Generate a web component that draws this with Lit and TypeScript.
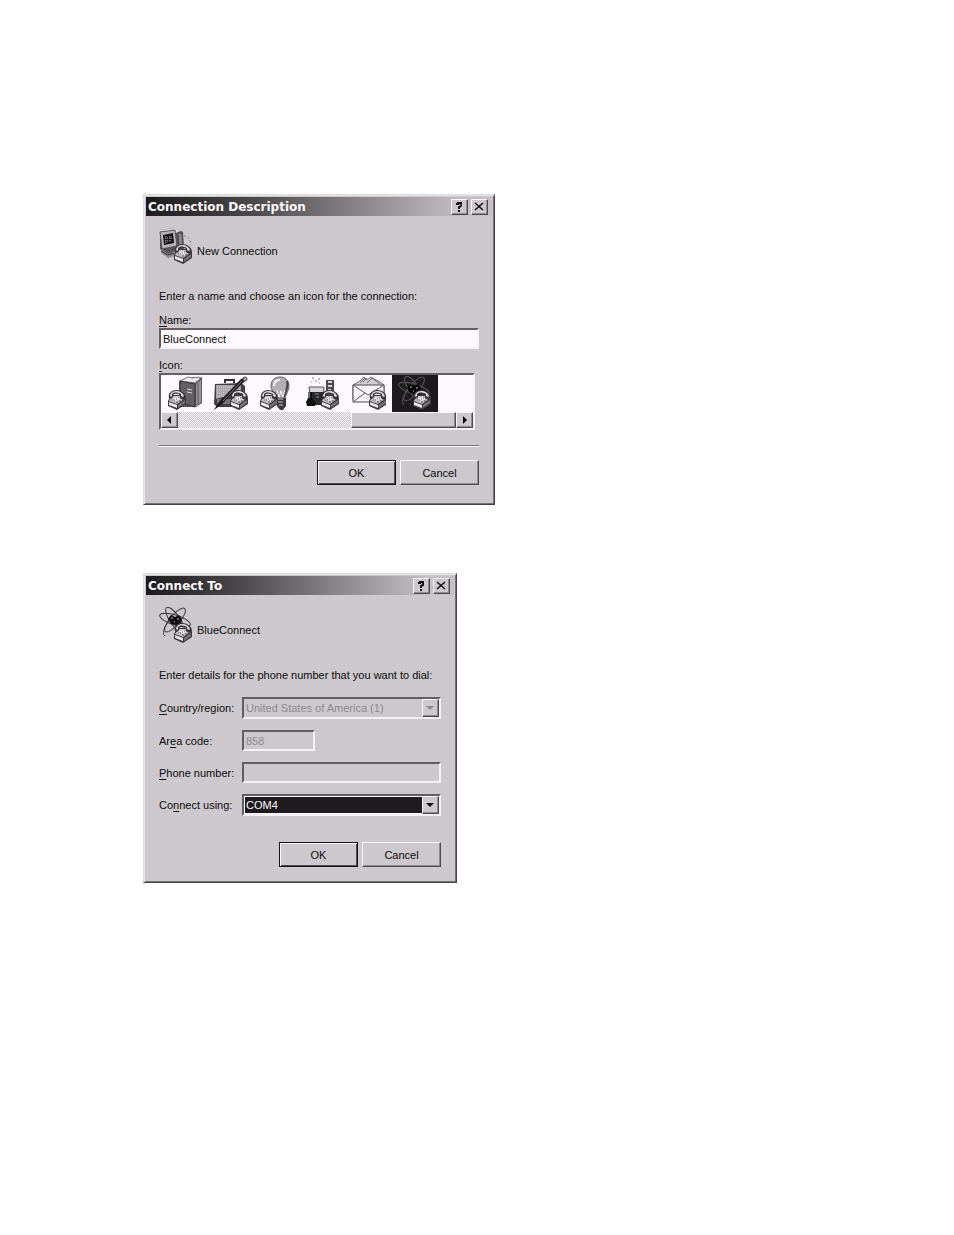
import { LitElement, html, svg, css, TemplateResult, SVGTemplateResult } from "lit";
import { customElement } from "lit/decorators.js";

/* Desk telephone, 18 x 19 units, placed with its top left corner at x, y. */
const phone = (x: number, y: number): SVGTemplateResult => svg`
  <g transform="translate(${x} ${y})">
    <path d="M3 5 L14 5 L18 8 L18 14 L9 20 L0 16 L0 11 Z" fill="#3c393c" />
    <path d="M4 6 L13 6 L16 9 L9 14 L1 11 Z" fill="#c4bfc4" />
    <path d="M1 12 L9 15 L9 18 L1 15 Z" fill="#ece8ec" />
    <path d="M10 15 L17 10 L17 13 L10 18 Z" fill="#777277" />
    <path d="M5 8 L10 7 L12 9 L8 11 Z" fill="#f4f0f4" />
    <path d="M6 10h1M8 9h1M10 8h1M4 10h1M8 12h2M11 11h2" stroke="#565256" />
    <path d="M1 8 C0 4 3 0 8 0 C13 0 17 3 18 7 L15 10 L12 8 L12 5 C9 3 6 4 5 5 L5 7 L3 9 Z" fill="#373437" />
    <path d="M2 6 C2 4 4 1 8 1 C12 1 15 3 16 6 L15 7 L13 6 L13 4 C9 2 6 2 4 4 L4 6 L3 7 Z" fill="#dad6da" />
  </g>`;

const atom = (line: string, core: string): SVGTemplateResult => svg`
  <g fill="none" stroke=${line}>
    <ellipse cx="16" cy="13" rx="16" ry="5" transform="rotate(18 16 13)" />
    <ellipse cx="16" cy="13" rx="15" ry="5" transform="rotate(-50 16 13)" />
    <ellipse cx="16" cy="13" rx="15" ry="5" transform="rotate(56 16 13)" />
    <path d="M6 29 C2 26 7 16 12 12" />
  </g>
  <path d="M9 12 L12 8 L16 10 L20 8 L23 12 L22 17 L17 18 L12 17 Z" fill=${core} />
  <path d="M12 11h2M18 12h2M15 15h1" stroke="#cbc7cb" />`;

const pictures: Record<string, SVGTemplateResult> = {
  computer: svg`
    <path d="M1 2 L16 0 L24 4 L25 21 L9 26 L1 21 Z" fill="#565256" />
    <path d="M1 2 L16 0 L22 3 L17 5 L2 6 Z" fill="#dedade" />
    <path d="M1 4 L16 2 L18 18 L3 21 Z" fill="#b8b3b8" stroke="#565256" />
    <path d="M4 7 L14 5 L15 15 L5 17 Z" fill="#171517" />
    <path d="M7 8v7M11 8v6M6 10h8M6 13h6" stroke="#aaa5aa" stroke-dasharray="1 1" />
    <path d="M19 4 L23 6 L24 18 L20 21 Z" fill="#898489" stroke="#383538" stroke-dasharray="2 1" />
    <path d="M2 22 L9 26 L16 23 L18 28 L9 30 L2 25 Z" fill="#918c91" />
    <path d="M2 23 L9 27 L15 25" stroke="#2c292c" fill="none" />
    <path d="M25 8 C29 8 32 12 32 17" fill="none" stroke="#807b80" stroke-dasharray="2 2" />
    ${phone(15, 16)}`,
  atom: svg`${atom("#3b383b", "#0c0b0c")}${phone(15, 16)}`,
  book: svg`
    <path d="M11 5 L25 1 L30 2 L34 1 L34 27 L28 31 L11 31 Z" fill="#5d595d" />
    <path d="M12 5 L20 1 L24 2 L31 1 L32 3 L27 7 Z" fill="#f3eff3" stroke="#777277" />
    <path d="M12 5 L27 8 L27 31 L12 27 Z" fill="#625e62" stroke="#353235" />
    <path d="M28 8 L33 4 L33 26 L28 30 Z" fill="#989398" />
    <path d="M30 7v21" stroke="#5a565a" />
    <path d="M19 13l5 1M19 16l5 1" stroke="#dcd8dc" />
    ${phone(0, 14)}`,
  briefcase: svg`
    <path d="M11 7 V4 H20 V7" fill="none" stroke="#343134" stroke-width="2" />
    <path d="M1 8 L27 7 L31 10 V27 L27 31 H3 L0 28 Z" fill="#403d40" />
    <path d="M2 9 H27 V16 L2 23 Z" fill="#aaa5aa" />
    <path d="M3 11h23M3 14h23M3 17h20M3 20h14" stroke="#d7d3d7" stroke-dasharray="1 1" />
    <path d="M3 23h22v5H3z" fill="#777277" />
    <path d="M0 34 L4 27 L27 3 L31 1 L31 5 L7 29 Z" fill="#1e1b1e" />
    <path d="M9 25 L28 5" stroke="#7f7a7f" />
    <circle cx="31" cy="3" r="2" fill="#aaa5aa" stroke="#4a464a" />
    ${phone(16, 14)}`,
  bulb: svg`
    <path d="M11 10 C11 4 15 1 20 1 C25 1 29 4 29 10 C29 14 26 18 25 22 L17 22 C16 18 11 15 11 10Z" fill="#b2adb2" stroke="#666166" />
    <path d="M14 10 C14 6 16 4 20 4" fill="none" stroke="#ffffff" stroke-width="2" />
    <path d="M27 5 C29 10 25 17 24 21" fill="none" stroke="#454145" stroke-width="2" />
    <path d="M17 14 L19 21 L21 15 L23 21 L25 14" fill="none" stroke="#f4f0f4" />
    <path d="M17 22 H26 V30 L23 34 H20 L17 30 Z" fill="#3c393c" />
    <path d="M18 23h5M18 26h5M19 29h4" stroke="#c5c1c5" />
    ${phone(0, 14)}`,
  flask: svg`
    <path d="M6 2h2M12 3h2M9 5h2M13 7h1M5 6h1" stroke="#807b80" />
    <path d="M20 4 H28 V20 H20 Z" fill="#4d494d" />
    <path d="M22 6h4M22 10h4M22 14h3" stroke="#d7d3d7" stroke-width="2" />
    <path d="M3 11 H18 L17 27 H5 Z" fill="#d9d5d9" stroke="#565256" />
    <path d="M4 16 H18 L17 29 H6 Z" fill="#2c292c" />
    <path d="M9 18h4M10 21h3" stroke="#8b868b" />
    <path d="M2 16 V22 L0 26 L1 30 H9 L10 27 L6 22 V16" fill="#111011" />
    <path d="M3 16v6" stroke="#ddd9dd" />
    ${phone(15, 14)}`,
  mail: svg`
    <path d="M1 9 L8 5 L12 1 L15 4 L19 1 L28 6 L32 9 V24 H1 Z" fill="#cfcbcf" stroke="#777277" />
    <path d="M8 7 L13 2M11 6 L15 2M15 7 L20 2 L28 8" stroke="#777277" fill="none" />
    <path d="M1 9 H32 V26 H1 Z" fill="#f6f2f6" stroke="#4d494d" />
    <path d="M1 9 L16 19 L32 9M1 26 L13 17M32 26 L19 17" fill="none" stroke="#5d595d" />
    ${phone(17, 14)}`,
  atomDark: svg`${atom("#5b575b", "#000000")}${phone(15, 14)}`,
};

const picture = (name: string): TemplateResult => html`
  <svg class="picture" viewBox="0 0 34 36" aria-hidden="true">${pictures[name]}</svg>`;

const triangle = (points: string): TemplateResult => html`
  <svg class="triangle" viewBox="0 0 9 9" aria-hidden="true"><polygon points=${points} /></svg>`;

const shared = css`
  * { box-sizing: border-box; }
  button, input, select {
    font: inherit;
    color: inherit;
    margin: 0;
    padding: 0;
    border-radius: 0;
    outline: none;
  }
  .raised {
    background: #cdc8cd;
    border: 1px solid;
    border-color: #f9f5f9 #4e4a4e #4e4a4e #f9f5f9;
    box-shadow: inset -1px -1px #8f8a8f;
  }
  .sunken {
    border: 2px solid;
    border-color: #625e62 #f4f0f4 #f4f0f4 #625e62;
  }
  .triangle { display: block; width: 9px; height: 9px; fill: currentColor; }
`;

@customElement("dialog-window")
class DialogWindow extends LitElement {
  static properties = { caption: {} };
  declare caption: string;

  static styles = [shared, css`
    :host {
      display: block;
      box-sizing: border-box;
      padding: 2px;
      background: #cdc8cd;
      border: 1px solid;
      border-color: #dedade #464246 #464246 #dedade;
      box-shadow: inset 1px 1px #e8e4e8, inset -1px -1px #767176;
      font: 11px/16px "Liberation Sans", sans-serif;
      color: #0c0b0c;
    }
    .bar {
      display: flex;
      align-items: center;
      gap: 3px;
      height: 19px;
      padding: 0 4px 0 2px;
      background: linear-gradient(90deg, #1c1a1c, #4b484b 30%, #8f8b8f 65%, #c5c0c5 92%);
    }
    h1 {
      flex: 1;
      margin: 0;
      font: bold 12px/18px "DejaVu Sans", sans-serif;
      color: #fcf8fc;
      white-space: nowrap;
    }
    .tool { display: grid; place-items: center; width: 17px; height: 16px; }
    .tool svg { display: block; width: 11px; height: 10px; }
    .content { padding: 12px 13px var(--foot, 17px); }
    .actions { display: flex; justify-content: flex-end; gap: 4px; }
    .action { width: 79px; height: 25px; }
    .main { border-color: #151315; box-shadow: inset 1px 1px #f9f5f9, inset -1px -1px #4e4a4e; }
  `];

  render() {
    return html`
      <header class="bar">
        <h1>${this.caption}</h1>
        <button class="tool raised" aria-label="Help">
          <svg viewBox="0 0 11 10" fill="none" stroke="#111" stroke-width="2">
            <path d="M3 3 V2 H4 V1 H7 V4 L5 5 V7M5 8 V10" />
          </svg>
        </button>
        <button class="tool raised" aria-label="Close">
          <svg viewBox="0 0 11 10" stroke="#111" stroke-width="1.5"><path d="M1 1 L9 8M9 1 L1 8" /></svg>
        </button>
      </header>
      <div class="content">
        <slot></slot>
        <div class="actions">
          <button class="action main raised">OK</button>
          <button class="action raised">Cancel</button>
        </div>
      </div>`;
  }
}

@customElement("app-root")
class AppRoot extends LitElement {
  static styles = [shared, css`
    :host { display: block; min-height: 100vh; background: #fff; }
    .page {
      display: flex;
      flex-direction: column;
      gap: 68px;
      padding: 194px 24px 24px 143px;
    }
    .description { width: 100%; max-width: 352px; }
    .connect { width: 100%; max-width: 314px; --foot: 13px; }
    .intro { display: flex; align-items: center; gap: 4px; }
    .picture { display: block; flex: none; width: 34px; height: 36px; }
    .intro span { padding-top: 10px; }
    p { margin: 0; padding: 24px 0 0; white-space: nowrap; }
    label, .label { display: block; }
    u { text-underline-offset: 2px; }
    input { width: 100%; height: 21px; padding: 0 2px; background: #fdf9fd; }
    .name { display: block; margin-top: 8px; }
    .label { margin-top: 8px; }
    .list { margin-right: 4px; background: #fdf9fd; }
    .options { display: flex; overflow: hidden; padding-left: 1px; }
    .option {
      flex: none;
      display: grid;
      place-items: center;
      width: 46px;
      height: 37px;
      background: none;
      border: 0;
    }
    .option[aria-selected="true"] { background: #1e1b1e; }
    .scroll {
      display: flex;
      height: 16px;
      background: repeating-conic-gradient(#f3eff3 0 25%, #cdc8cd 0 50%) 0 0 / 2px 2px;
    }
    .arrow { display: grid; place-items: center; flex: none; width: 17px; height: 16px; }
    .track { flex: 175; }
    .thumb { flex: 104; }
    hr {
      margin: 15px 0 13px;
      border: 0;
      border-top: 1px solid #7a757a;
      border-bottom: 1px solid #f9f5f9;
    }
    .form {
      display: grid;
      grid-template-columns: 78px 1fr;
      column-gap: 5px;
      row-gap: 11px;
      align-items: center;
      padding: 14px 0 26px;
    }
    .form label { white-space: nowrap; }
    .form input { background: #cdc8cd; }
    .form input:disabled { color: #8d888d; }
    .form .area { width: 73px; }
    .combo { display: grid; height: 22px; }
    .combo select {
      grid-area: 1 / 1;
      width: 100%;
      min-width: 0;
      appearance: none;
      background: #1e1b1e;
      color: #fdf9fd;
      border: 1px solid #fdf9fd;
      padding: 0 18px 0 1px;
    }
    .combo select:disabled { background: #cdc8cd; color: #8d888d; border-color: #cdc8cd; opacity: 1; }
    .combo .arrow { grid-area: 1 / 1; justify-self: end; height: 18px; pointer-events: none; }
    .combo select:disabled + .arrow { color: #8d888d; }
  `];

  render() {
    const icons = ["book", "briefcase", "bulb", "flask", "mail", "atomDark"];
    return html`
      <main class="page">
        <dialog-window class="description" caption="Connection Description">
          <div class="intro">${picture("computer")}<span>New Connection</span></div>
          <p>Enter a name and choose an icon for the connection:</p>
          <label class="name" for="name"><u>N</u>ame:</label>
          <input id="name" class="sunken" value="BlueConnect" />
          <div class="label" id="icon-label"><u>I</u>con:</div>
          <div class="list sunken">
            <div class="options" role="listbox" aria-labelledby="icon-label">
              ${icons.map((name) => html`
                <button class="option" role="option" aria-label=${name}
                  aria-selected=${name === "atomDark" ? "true" : "false"}>${picture(name)}</button>`)}
            </div>
            <div class="scroll">
              <button class="arrow raised" aria-label="Scroll left">${triangle("6,0 6,8 2,4")}</button>
              <div class="track"></div>
              <div class="thumb raised"></div>
              <button class="arrow raised" aria-label="Scroll right">${triangle("3,0 3,8 7,4")}</button>
            </div>
          </div>
          <hr />
        </dialog-window>

        <dialog-window class="connect" caption="Connect To">
          <div class="intro">${picture("atom")}<span>BlueConnect</span></div>
          <p>Enter details for the phone number that you want to dial:</p>
          <div class="form">
            <label for="country"><u>C</u>ountry/region:</label>
            <div class="combo sunken">
              <select id="country" disabled><option>United States of America (1)</option></select>
              <span class="arrow raised">${triangle("0,2 8,2 4,6")}</span>
            </div>
            <label for="area">Ar<u>e</u>a code:</label>
            <input id="area" class="area sunken" value="858" disabled />
            <label for="phone"><u>P</u>hone number:</label>
            <input id="phone" class="sunken" disabled />
            <label for="port">Co<u>n</u>nect using:</label>
            <div class="combo sunken">
              <select id="port"><option>COM4</option></select>
              <span class="arrow raised">${triangle("0,2 8,2 4,6")}</span>
            </div>
          </div>
        </dialog-window>
      </main>`;
  }
}
